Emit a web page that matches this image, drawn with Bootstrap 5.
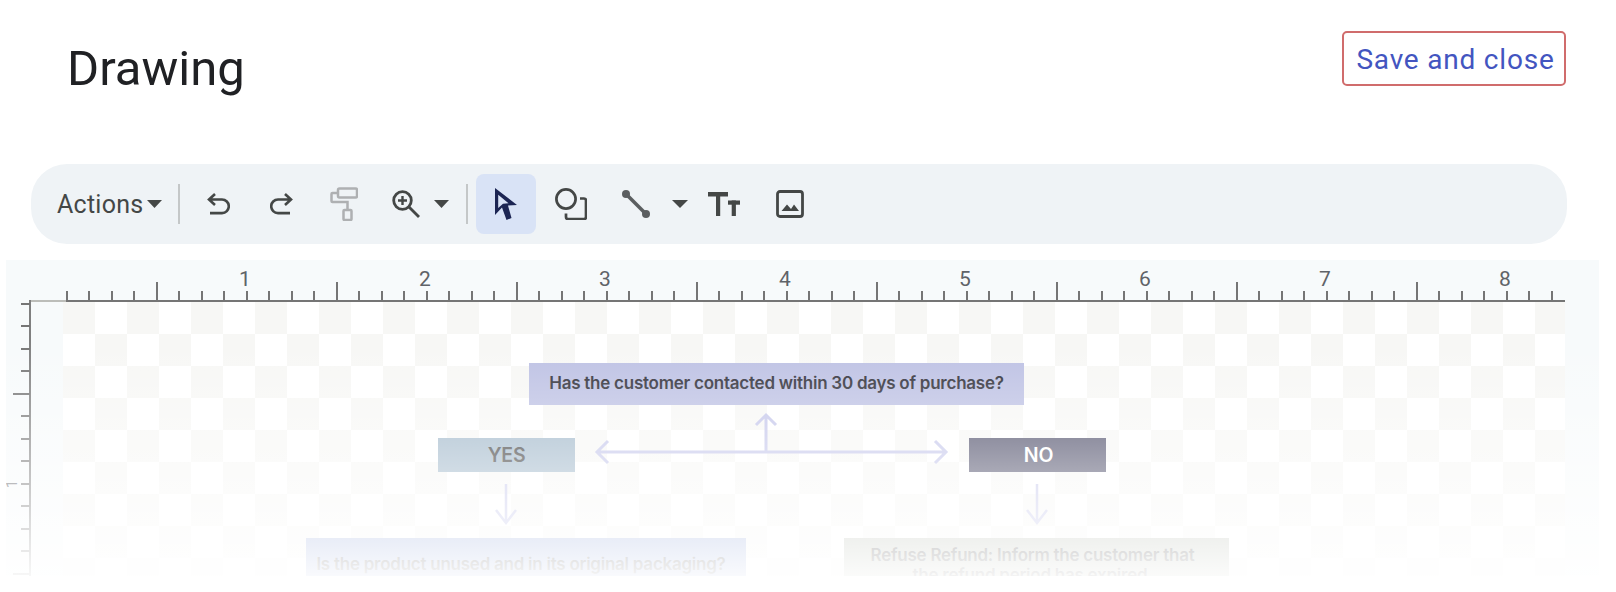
<!doctype html>
<html lang="en">
<head>
<meta charset="utf-8">
<title>Drawing</title>
<link href="https://cdn.jsdelivr.net/npm/bootstrap@5.3.0/dist/css/bootstrap.min.css" rel="stylesheet">
<style>
html,body{background:#fff;margin:0;overflow:hidden}
.page-head{height:164px}
.page-title{font:400 49px/1 Roboto,sans-serif;color:#202124;margin:44px 0 0 67px}
.save-btn{font:400 28px/1 Roboto,sans-serif;letter-spacing:.8px;color:#4355c0;border:2px solid #d06c6c;border-radius:5px;background:#fff;width:224px;height:55px;margin:31px 50px 0 0;padding:2px 0 0 3px}
.save-btn:hover{color:#4355c0;border-color:#d06c6c}
.toolbar-pill{height:80px;margin:0 49px 0 31px;padding-left:26px;background:#eff3f6;border-radius:36px}
.tb-label{font:400 25px/1 Roboto,sans-serif;letter-spacing:.25px;color:#444746;width:90px}
.tb-sep{width:2px;height:40px;background:#c4c7c8}
.tb-btn{padding:0;border:0;background:none;line-height:0;flex:none}
.tb-btn svg{display:block}
.ml-undo{margin-left:26px}.ml-redo{margin-left:40px}.ml-roller{margin-left:36px}.ml-zoom{margin-left:34px}
.ml-c1{margin-left:14px}.ml-s1{margin-left:17px}.ml-s0{margin-left:16px}
.tb-active{width:60px;height:60px;margin-left:8px;background:#d9e3f6;border-radius:8px;justify-content:center}
.ml-shape{margin-left:19px}.ml-line{margin-left:35px}.ml-c2{margin-left:22px}.ml-tt{margin-left:20px}.ml-img{margin-left:36px}
.stage{position:relative;overflow:hidden;height:316px;margin:16px 17px 0 6px;background:#f7fafb}
.nums{height:30px;margin-bottom:-8px;padding:7px 0 0 149px;font:400 21px/24px Roboto,sans-serif;color:#5f6368}
.nums span{width:180px;flex:none;text-align:center}
.hticks{height:18px;margin-left:60px;width:1488px;
 background-image:repeating-linear-gradient(90deg,transparent 0 90px,#757575 90px 92px,transparent 92px 180px),repeating-linear-gradient(90deg,#757575 0 2px,transparent 2px 22px,#757575 22px 24px,transparent 24px 45px,#757575 45px 47px,transparent 47px 67px,#757575 67px 69px,transparent 69px 90px);
 background-size:100% 18px,100% 9px;background-position:0 0,0 100%;background-repeat:no-repeat}
.hline{height:2px;width:1535px;margin-left:24px;box-sizing:border-box;background:#757575;border-left:36px solid #bcbdb9}
.stage-body{height:274px}
.vruler{position:relative;width:57px;flex:none}
.vline{position:absolute;left:23px;top:-2px;bottom:0;width:2px;background:#7f7f7f}
.vsmall{position:absolute;left:15px;width:9px;top:1px;bottom:0;background:repeating-linear-gradient(180deg,#757575 0 2px,transparent 2px 22px,#757575 22px 24px,transparent 24px 45px,#757575 45px 47px,transparent 47px 67px,#757575 67px 69px,transparent 69px 90px)}
.vtall{position:absolute;left:7px;width:17px;top:0;bottom:0;background:repeating-linear-gradient(180deg,transparent 0 91px,#757575 91px 93px,transparent 93px 180px)}
.vnum{position:absolute;left:-6px;top:170px;width:24px;text-align:center;font:400 15px/24px Roboto,sans-serif;color:#5f6368;transform:rotate(-90deg)}
.sheet{position:relative;width:1502px;flex:none;
 background:conic-gradient(#fff 25%,#f7f7f5 0 50%,#fff 0 75%,#f7f7f5 0) 0 0/64px 64px}
.flow-lines{position:absolute;left:0;top:0}
.node{position:absolute;display:flex;align-items:center;justify-content:center;font:600 17px/20px Inter,sans-serif;letter-spacing:-.25px;color:#2c2c36}
.n-ask{left:466px;top:61px;width:495px;height:42px;padding-bottom:3px;background:#bcc0e3}
.n-yes{left:375px;top:136px;width:137px;height:34px;background:#9db5c8;color:#333;font-size:19.500px}
.n-no{left:906px;top:136px;width:137px;height:34px;padding-left:2px;background:#494965;color:#fff;font-size:19.500px}
.n-unused{left:243px;top:236px;width:440px;height:80px;background:#96a9db;align-items:flex-start;padding:16px 10px 0 0;color:#333}
.n-refuse{left:781px;top:236px;width:385px;height:80px;background:#b5bbaf;align-items:flex-start;padding:7px 8px 0 0;text-align:center;color:#333}
.fade-out{position:absolute;left:0;right:0;top:80px;bottom:0;background:linear-gradient(180deg,rgba(255,255,255,0),rgba(255,255,255,.94))}
</style>
</head>
<body>
<header class="page-head d-flex justify-content-between align-items-start">
  <h1 class="page-title">Drawing</h1>
  <button type="button" class="btn save-btn">Save and close</button>
</header>

<div class="toolbar-pill d-flex align-items-center">
  <span class="tb-label">Actions</span>
  <button class="tb-btn" aria-label="Actions menu"><svg width="15" height="8"><path d="M0 0h15L7.5 8z" fill="#444746"/></svg></button>
  <span class="tb-sep ml-s0"></span>
  <button class="tb-btn ml-undo" aria-label="Undo"><svg width="24" height="24" fill="none" stroke="#444746" stroke-width="2.6"><path d="M9 2 3 7.5 9 13M3 7.5h13a6.8 6.8 0 0 1 0 13.6H4"/></svg></button>
  <button class="tb-btn ml-redo" aria-label="Redo"><svg width="24" height="24" fill="none" stroke="#444746" stroke-width="2.6"><path d="M15 2l6 5.5-6 5.5M21 7.5H8a6.8 6.8 0 0 0 0 13.6h12"/></svg></button>
  <button class="tb-btn ml-roller" aria-label="Paint format"><svg width="28" height="34" fill="none" stroke="#aeb0b2" stroke-width="2.5"><rect x="8" y="1.5" width="19" height="9" rx="1.5"/><path d="M8 6H2.5a1 1 0 0 0-1 1v7a1 1 0 0 0 1 1h15v8"/><rect x="13.5" y="23" width="8" height="10" rx="1"/></svg></button>
  <button class="tb-btn ml-zoom" aria-label="Zoom"><svg width="28" height="28" fill="none" stroke="#444746" stroke-width="2.8"><circle cx="10.5" cy="10.5" r="8.8"/><path d="M17 17l10 10"/><path d="M6 10.5h9M10.5 6v9" stroke-width="2.4"/></svg></button>
  <button class="tb-btn ml-c1" aria-label="Zoom menu"><svg width="15" height="8"><path d="M0 0h15L7.5 8z" fill="#444746"/></svg></button>
  <span class="tb-sep ml-s1"></span>
  <button class="tb-btn tb-active d-flex align-items-center" aria-label="Select"><svg width="22" height="32"><path fill-rule="evenodd" d="M0 0 22 17l-9 .5L16.500 30 11.500 32 7 19.500 0 27zM3.200 6.700V20l4.800-4.300 5.500-.5z" fill="#1c2553"/></svg></button>
  <button class="tb-btn ml-shape" aria-label="Shape"><svg width="32" height="32" fill="none" stroke="#444746" stroke-width="2.7"><circle cx="11" cy="11" r="9.600"/><path d="M25 10.500h4a2 2 0 0 1 2 2V29a2 2 0 0 1-2 2H13a2 2 0 0 1-2-2v-3.500"/></svg></button>
  <button class="tb-btn ml-line" aria-label="Line"><svg width="28" height="28" fill="#5b5e60" stroke="#5b5e60"><path d="M4 4l20 20" stroke-width="3.600"/><circle cx="4" cy="4" r="4" stroke="none"/><circle cx="24" cy="24" r="4" stroke="none"/></svg></button>
  <button class="tb-btn ml-c2" aria-label="Line menu"><svg width="16" height="8"><path d="M0 0h16L8 8z" fill="#444746"/></svg></button>
  <button class="tb-btn ml-tt" aria-label="Text box"><svg width="32" height="24" fill="#444746"><rect width="20" height="4.500"/><rect x="8" width="4.200" height="24"/><rect x="20" y="8.500" width="12" height="4.200"/><rect x="23.700" y="8.500" width="4.200" height="15.500"/></svg></button>
  <button class="tb-btn ml-img" aria-label="Image"><svg width="28" height="28"><rect x="1.500" y="1.500" width="25" height="25" rx="2.500" fill="none" stroke="#444746" stroke-width="2.8"/><path d="M5.500 21 11 14.500l4 4.500 3-4.500 5 6.500z" fill="#444746"/></svg></button>
</div>

<section class="stage">
  <div class="nums d-flex"><span>1</span><span>2</span><span>3</span><span>4</span><span>5</span><span>6</span><span>7</span><span>8</span></div>
  <div class="hticks"></div>
  <div class="hline"></div>
  <div class="stage-body d-flex">
    <div class="vruler">
      <div class="vline"></div><div class="vsmall"></div><div class="vtall"></div>
      <div class="vnum">1</div>
    </div>
    <div class="sheet">
      <svg class="flow-lines" width="1502" height="274" fill="none" stroke="#c2c4ea" stroke-width="3">
        <path d="M534 150H883M545 139 534 150 545 161M872 139 883 150 872 161M703 150V113M693 123 703 113 713 123"/>
        <path d="M443 182V221M433 208 443 221 453 208M974 182V221M964 208 974 221 984 208" stroke-width="2.500"/>
      </svg>
      <div class="node n-ask">Has the customer contacted within 30 days of purchase?</div>
      <div class="node n-yes">YES</div>
      <div class="node n-no">NO</div>
      <div class="node n-unused">Is the product unused and in its original packaging?</div>
      <div class="node n-refuse">Refuse Refund: Inform the customer that<br>the refund period has expired.</div>
    </div>
  </div>
  <div class="fade-out"></div>
</section>
<script src="https://cdn.jsdelivr.net/npm/bootstrap@5.3.0/dist/js/bootstrap.bundle.min.js"></script>
</body>
</html>
